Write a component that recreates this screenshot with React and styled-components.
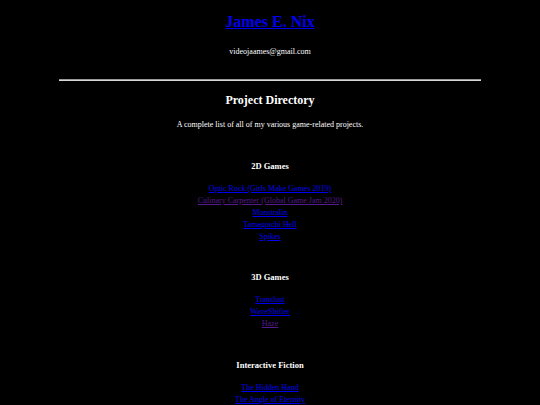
import { createGlobalStyle, styled } from "styled-components";

const GlobalStyle = createGlobalStyle`
	html, body {
		margin: 0;
		padding: 0;
		background: #000;
	}
	body {
		font-family: "Liberation Serif", "Times New Roman", serif;
		color: #fff;
	}
`;

const Page = styled.div`
	min-height: 405px;
	padding: 0 6px;
	text-align: center;
	background: #000;
	overflow: hidden;
`;

const Header = styled.header`
	display: flex;
	flex-direction: column;
	align-items: center;
`;

const Title = styled.h1`
	margin: 12px 0 0;
	font-size: 16px;
	line-height: 20px;
	font-weight: bold;
	a {
		color: #0000ee;
	}
`;

const Email = styled.p`
	margin: 15px 0 0;
	font-size: 8px;
	line-height: 10px;
`;

const Rule = styled.hr`
	width: 80%;
	margin: 22px auto 0;
	height: 0;
	border: none;
	border-top: 1px solid #9a9a9a;
	border-bottom: 1px solid #d8d8d8;
`;

const Heading = styled.h2`
	margin: 12px 0 0;
	font-size: 12px;
	line-height: 14px;
	font-weight: bold;
`;

const Intro = styled.p`
	margin: 13px 0 0;
	font-size: 8px;
	line-height: 10px;
`;

const Category = styled.section`
	margin-top: ${(p) => p.$gap}px;
`;

const CategoryTitle = styled.h3`
	margin: 0;
	font-size: 8.5px;
	line-height: 10px;
	font-weight: bold;
`;

const LinkList = styled.ul`
	list-style: none;
	margin: 12px 0 0;
	padding: 0;
	li {
		font-size: 8px;
		line-height: 12px;
	}
`;

const ProjectLink = styled.a`
	color: ${(p) => (p.$visited ? "#551a8b" : "#0000ee")};
`;

const categories = [
	{
		title: "2D Games",
		gap: 31,
		links: [
			{ name: "Optic Rock (Girls Make Games 2019)" },
			{ name: "Culinary Carpenter (Global Game Jam 2020)", visited: true },
			{ name: "Monstralin" },
			{ name: "Tamagotchi Hell" },
			{ name: "Spikes" },
		],
	},
	{
		title: "3D Games",
		gap: 29,
		links: [
			{ name: "Translust" },
			{ name: "WaveShifter" },
			{ name: "Haze", visited: true },
		],
	},
	{
		title: "Interactive Fiction",
		gap: 30,
		links: [{ name: "The Hidden Hand" }, { name: "The Angle of Eternity" }],
	},
];

export default function App() {
	return (
		<Page>
			<GlobalStyle />
			<Header>
				<Title>
					<a href="#">James E. Nix</a>
				</Title>
				<Email>videojaames@gmail.com</Email>
			</Header>

			<Rule />

			<Heading>Project Directory</Heading>
			<Intro>A complete list of all of my various game-related projects.</Intro>

			{categories.map((c) => (
				<Category key={c.title} $gap={c.gap}>
					<CategoryTitle>{c.title}</CategoryTitle>
					<LinkList>
						{c.links.map((l) => (
							<li key={l.name}>
								<ProjectLink href="#" $visited={l.visited}>
									{l.name}
								</ProjectLink>
							</li>
						))}
					</LinkList>
				</Category>
			))}
		</Page>
	);
}
